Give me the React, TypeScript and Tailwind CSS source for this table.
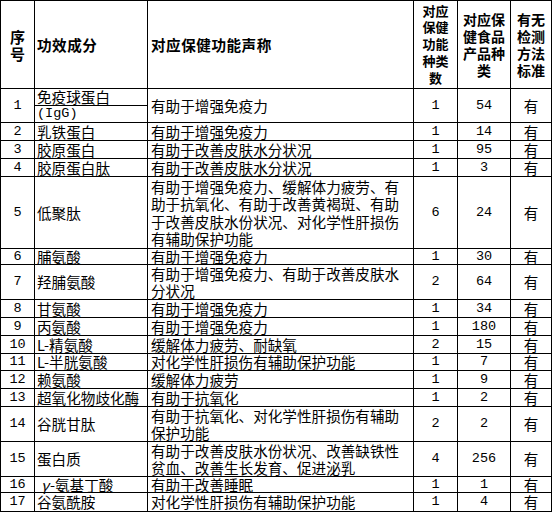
type Row = {
  n: string;
  name: string;
  claim: string[];
  k: string;
  c: string;
  h: string;
};

const rows: Row[] = [
  { n: "1", name: "", claim: ["有助于增强免疫力"], k: "1", c: "54", h: "h-[34px]" },
  { n: "2", name: "乳铁蛋白", claim: ["有助于增强免疫力"], k: "1", c: "14", h: "h-[18px]" },
  { n: "3", name: "胶原蛋白", claim: ["有助于改善皮肤水分状况"], k: "1", c: "95", h: "h-[18px]" },
  { n: "4", name: "胶原蛋白肽", claim: ["有助于改善皮肤水分状况"], k: "1", c: "3", h: "h-[18px]" },
  {
    n: "5",
    name: "低聚肽",
    claim: [
      "有助于增强免疫力、缓解体力疲劳、有",
      "助于抗氧化、有助于改善黄褐斑、有助",
      "于改善皮肤水份状况、对化学性肝损伤",
      "有辅助保护功能",
    ],
    k: "6",
    c: "24",
    h: "h-[72px]",
  },
  { n: "6", name: "脯氨酸", claim: ["有助于增强免疫力"], k: "1", c: "30", h: "h-[16px]" },
  {
    n: "7",
    name: "羟脯氨酸",
    claim: ["有助于增强免疫力、有助于改善皮肤水", "分状况"],
    k: "2",
    c: "64",
    h: "h-[35px]",
  },
  { n: "8", name: "甘氨酸", claim: ["有助于增强免疫力"], k: "1", c: "34", h: "h-[18px]" },
  { n: "9", name: "丙氨酸", claim: ["有助于增强免疫力"], k: "1", c: "180", h: "h-[18px]" },
  { n: "10", name: "L-精氨酸", claim: ["缓解体力疲劳、耐缺氧"], k: "2", c: "15", h: "h-[18px]" },
  { n: "11", name: "L-半胱氨酸", claim: ["对化学性肝损伤有辅助保护功能"], k: "1", c: "7", h: "h-[17px]" },
  { n: "12", name: "赖氨酸", claim: ["缓解体力疲劳"], k: "1", c: "9", h: "h-[18px]" },
  { n: "13", name: "超氧化物歧化酶", claim: ["有助于抗氧化"], k: "1", c: "2", h: "h-[18px]" },
  {
    n: "14",
    name: "谷胱甘肽",
    claim: ["有助于抗氧化、对化学性肝损伤有辅助", "保护功能"],
    k: "2",
    c: "2",
    h: "h-[35px]",
  },
  {
    n: "15",
    name: "蛋白质",
    claim: ["有助于改善皮肤水份状况、改善缺铁性", "贫血、改善生长发育、促进泌乳"],
    k: "4",
    c: "256",
    h: "h-[35px]",
  },
  { n: "16", name: "γ-氨基丁酸", claim: ["有助于改善睡眠"], k: "1", c: "1", h: "h-[16px]" },
  { n: "17", name: "谷氨酰胺", claim: ["对化学性肝损伤有辅助保护功能"], k: "1", c: "4", h: "h-[19px]" },
];

const cell = "border-r border-black flex items-center shrink-0";
const mono = "font-['Liberation_Mono',monospace] text-[13.5px]";

function Lines({ lines }: { lines: string[] }) {
  return (
    <div>
      {lines.map((l) => (
        <div key={l}>{l}</div>
      ))}
    </div>
  );
}

export default function App() {
  return (
    <div className="w-[554px] h-[514px] bg-white text-black font-['Noto_Sans_CJK_SC',sans-serif] text-[14.6px]">
      <div className="w-[552px] border-t border-l border-black">
        {/* header */}
        <div className="flex h-[88px] border-b border-black font-bold leading-[17px]">
          <div className={`${cell} w-[34px] justify-center text-center text-[15px]`}>
            <Lines lines={["序", "号"]} />
          </div>
          <div className={`${cell} w-[113px] pl-[2px] text-[14.6px] tracking-[0.5px]`}>功效成分</div>
          <div className={`${cell} w-[266px] pl-[3px] text-[14.6px] tracking-[0.5px]`}>对应保健功能声称</div>
          <div className={`${cell} w-[44px] justify-center text-center text-[13px] leading-[16.8px]`}>
            <Lines lines={["对应", "保健", "功能", "种类", "数"]} />
          </div>
          <div className={`${cell} w-[53px] justify-center text-center text-[14px]`}>
            <Lines lines={["对应保", "健食品", "产品种", "类"]} />
          </div>
          <div className={`${cell} w-[41px] justify-center text-center text-[14px]`}>
            <Lines lines={["有无", "检测", "方法", "标准"]} />
          </div>
        </div>

        {rows.map((r) => (
          <div key={r.n} className={`flex ${r.h} border-b border-black leading-[17.5px]`}>
            <div className={`${cell} w-[34px] justify-center ${mono}`}>{r.n}</div>
            {r.n === "1" ? (
              <div className="border-r border-black w-[113px] shrink-0 flex flex-col">
                <div className="h-[17px] border-b border-black pl-[2px] leading-[16px]">免疫球蛋白</div>
                <div className={`flex-1 pl-[2px] leading-[16px] ${mono}`}>(IgG)</div>
              </div>
            ) : (
              <div className={`${cell} w-[113px] pl-[2px] whitespace-nowrap`}>
                {r.name.startsWith("γ") ? (
                  <>
                    <span className="italic pl-[4px] pr-[1px]">γ</span>
                    {r.name.slice(1)}
                  </>
                ) : (
                  r.name
                )}
              </div>
            )}
            <div className={`${cell} w-[266px] pl-[3px] whitespace-nowrap`}>
              <Lines lines={r.claim} />
            </div>
            <div className={`${cell} w-[44px] justify-center ${mono}`}>{r.k}</div>
            <div className={`${cell} w-[53px] justify-center ${mono}`}>{r.c}</div>
            <div className={`${cell} w-[41px] justify-center`}>有</div>
          </div>
        ))}
      </div>
    </div>
  );
}
